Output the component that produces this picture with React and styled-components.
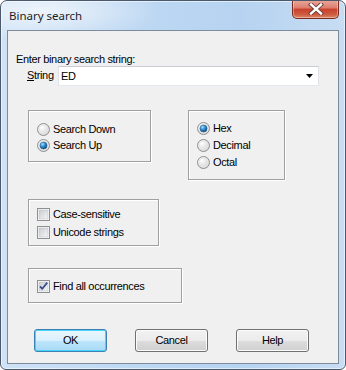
import React from "react";
import styled, { createGlobalStyle } from "styled-components";

const Global = createGlobalStyle`
  html, body { margin: 0; padding: 0; background: #ffffff; }
  body { width: 346px; height: 370px; overflow: hidden; }
`;

const Window = styled.div`
  position: relative;
  width: 346px;
  height: 370px;
  box-sizing: border-box;
  border: 1px solid #4a5a6c;
  border-radius: 7px 7px 6px 6px;
  background:
    radial-gradient(ellipse 120px 30px at 40px 10px, rgba(255,255,255,0.65), rgba(255,255,255,0) 100%),
    linear-gradient(to right, #cfe2f6 0%, #bcd7f2 45%, #b6d3f1 70%, #c8ddf3 100%);
  box-shadow: inset 0 0 0 1px rgba(255,255,255,0.55);
  display: flex;
  flex-direction: column;
  overflow: hidden;
`;

const TitleBar = styled.div`
  height: 29px;
  display: flex;
  align-items: flex-start;
  justify-content: space-between;
`;

const Title = styled.div`
  font-family: "Noto Sans", "Open Sans", sans-serif;
  font-size: 11.5px;
  color: #1e1e1e;
  padding: 7px 0 0 8px;
  line-height: 16px;
`;

const CloseButton = styled.div`
  width: 47px;
  height: 19px;
  margin: -1px 6px 0 0;
  box-sizing: border-box;
  border: 1px solid #7a2c22;
  border-top: none;
  border-radius: 0 0 5px 5px;
  background: linear-gradient(to bottom, #e9a99c 0%, #dc7d6c 45%, #c8412d 50%, #cf5a3f 80%, #dd8a66 100%);
  box-shadow: inset 0 0 0 1px rgba(255,255,255,0.35);
  display: flex;
  align-items: center;
  justify-content: center;
`;

const Client = styled.div`
  margin: 0 6px;
  height: 334px;
  box-sizing: border-box;
  border: 1px solid #7d8c9c;
  background: #f0f0f0;
  padding: 22px 0 0 8px;
  display: flex;
  flex-direction: column;
  font-family: "Liberation Sans", Arial, sans-serif;
  font-size: 11px;
  color: #000;
  letter-spacing: -0.35px;
`;

const Prompt = styled.div`
  line-height: 13px;
  height: 13px;
`;

const StringRow = styled.div`
  display: flex;
  align-items: center;
  height: 20px;
`;

const FieldLabel = styled.div`
  width: 31px;
  padding-left: 11px;
  line-height: 13px;
  margin-top: -1px;
`;

const Combo = styled.div`
  width: 261px;
  height: 20px;
  box-sizing: border-box;
  background: #fff;
  border: 1px solid;
  border-color: #c9ccd2 #dfe3e8 #e3e9ef #dfe3e8;
  display: flex;
  align-items: center;
  justify-content: space-between;
  padding: 0 5px 0 2px;
`;

const ComboText = styled.span`
  line-height: 13px;
`;

const Row = styled.div`
  display: flex;
  align-items: flex-start;
  gap: ${(p) => p.$gap || 0}px;
  margin-top: ${(p) => p.$top || 0}px;
  padding-left: ${(p) => p.$left || 0}px;
`;

const Group = styled.div`
  width: ${(p) => p.$w}px;
  height: ${(p) => p.$h}px;
  box-sizing: border-box;
  border: 1px solid #a0a0a0;
  box-shadow: 1px 1px 0 #ffffff, inset 1px 1px 0 #ffffff;
  padding: ${(p) => p.$pt}px 0 0 8px;
  display: flex;
  flex-direction: column;
  margin-top: ${(p) => p.$mt || 0}px;
  margin-left: ${(p) => p.$ml || 0}px;
`;

const Option = styled.div`
  display: flex;
  align-items: center;
  gap: 3px;
  height: ${(p) => p.$h}px;
  line-height: 13px;
`;

const ButtonRow = styled.div`
  display: flex;
  gap: 28px;
  margin-top: 26px;
  padding-left: 18px;
`;

const Button = styled.div`
  width: 73px;
  height: 23px;
  box-sizing: border-box;
  border: 1px solid ${(p) => (p.$default ? "#3c7fb1" : "#707070")};
  border-radius: 3px;
  background: ${(p) =>
    p.$default
      ? "linear-gradient(to bottom, #eaf6fd 0%, #d9f0fc 50%, #bee6fd 51%, #a7d9f5 100%)"
      : "linear-gradient(to bottom, #f2f2f2 0%, #ebebeb 50%, #dddddd 51%, #cfcfcf 100%)"};
  box-shadow: inset 0 0 0 1px ${(p) => (p.$default ? "#48d5fd" : "#fcfcfc")};
  display: flex;
  align-items: center;
  justify-content: center;
  line-height: 13px;
`;

const Radio = ({ checked }) => (
  <svg width="13" height="13" viewBox="0 0 13 13">
    <defs>
      <radialGradient id="rfill" cx="0.35" cy="0.3" r="0.8">
        <stop offset="0" stopColor="#ffffff" />
        <stop offset="1" stopColor="#cfcfcf" />
      </radialGradient>
      <radialGradient id="rdot" cx="0.35" cy="0.3" r="0.75">
        <stop offset="0" stopColor="#a6e0fb" />
        <stop offset="0.5" stopColor="#2c8ed3" />
        <stop offset="1" stopColor="#0a4674" />
      </radialGradient>
    </defs>
    <circle cx="6.5" cy="6.5" r="6" fill="url(#rfill)" stroke="#8f8f8f" strokeWidth="1" />
    <circle cx="6.5" cy="6.5" r="4.5" fill="none" stroke="#e6e6e6" strokeWidth="1" />
    {checked && <circle cx="6.5" cy="6.5" r="3.5" fill="url(#rdot)" stroke="#1b5a8c" strokeWidth="0.6" />}
  </svg>
);

const Check = ({ checked }) => (
  <svg width="13" height="13" viewBox="0 0 13 13">
    <defs>
      <linearGradient id="cfill" x1="0" y1="0" x2="1" y2="1">
        <stop offset="0" stopColor="#c8ccd2" />
        <stop offset="1" stopColor="#f6f6f6" />
      </linearGradient>
    </defs>
    <rect x="0.5" y="0.5" width="12" height="12" fill="#ffffff" stroke="#8f8f8f" />
    <rect x="2" y="2" width="9" height="9" fill="url(#cfill)" stroke="#b3b8bf" strokeWidth="0.5" />
    {checked && (
      <path d="M3 6.3 L5.3 8.8 L10.2 2.6" fill="none" stroke="#3a4f8c" strokeWidth="1.8" strokeLinejoin="round" />
    )}
  </svg>
);

const CloseX = () => (
  <svg width="16" height="12" viewBox="0 0 16 12">
    <path d="M3 1.5 L13 10.5 M13 1.5 L3 10.5" stroke="#6b3a34" strokeWidth="4.2" strokeLinecap="square" />
    <path d="M3 1.5 L13 10.5 M13 1.5 L3 10.5" stroke="#ffffff" strokeWidth="2.4" strokeLinecap="square" />
  </svg>
);

const Arrow = () => (
  <svg width="7" height="4" viewBox="0 0 7 4">
    <path d="M0 0 H7 L3.5 4 Z" fill="#000" />
  </svg>
);

export default function App() {
  return (
    <>
      <Global />
      <Window>
        <TitleBar>
          <Title>Binary search</Title>
          <CloseButton>
            <CloseX />
          </CloseButton>
        </TitleBar>
        <Client>
          <Prompt>Enter binary search string:</Prompt>
          <StringRow>
            <FieldLabel>
              <u>S</u>tring
            </FieldLabel>
            <Combo>
              <ComboText>ED</ComboText>
              <Arrow />
            </Combo>
          </StringRow>
          <Row $top={24} $left={12} $gap={37}>
            <Group $w={123} $h={52} $pt={10}>
              <Option $h={16}>
                <Radio />
                <span>Search Down</span>
              </Option>
              <Option $h={16}>
                <Radio checked />
                <span>Search Up</span>
              </Option>
            </Group>
            <Group $w={97} $h={70} $pt={9}>
              <Option $h={17}>
                <Radio checked />
                <span>Hex</span>
              </Option>
              <Option $h={17}>
                <Radio />
                <span>Decimal</span>
              </Option>
              <Option $h={17}>
                <Radio />
                <span>Octal</span>
              </Option>
            </Group>
          </Row>
          <Group $w={131} $h={47} $pt={5} $mt={19} $ml={12}>
            <Option $h={18}>
              <Check />
              <span>Case-sensitive</span>
            </Option>
            <Option $h={18}>
              <Check />
              <span>Unicode strings</span>
            </Option>
          </Group>
          <Group $w={154} $h={35} $pt={8} $mt={22} $ml={12}>
            <Option $h={18}>
              <Check checked />
              <span>Find all occurrences</span>
            </Option>
          </Group>
          <ButtonRow>
            <Button $default>OK</Button>
            <Button>Cancel</Button>
            <Button>Help</Button>
          </ButtonRow>
        </Client>
      </Window>
    </>
  );
}
